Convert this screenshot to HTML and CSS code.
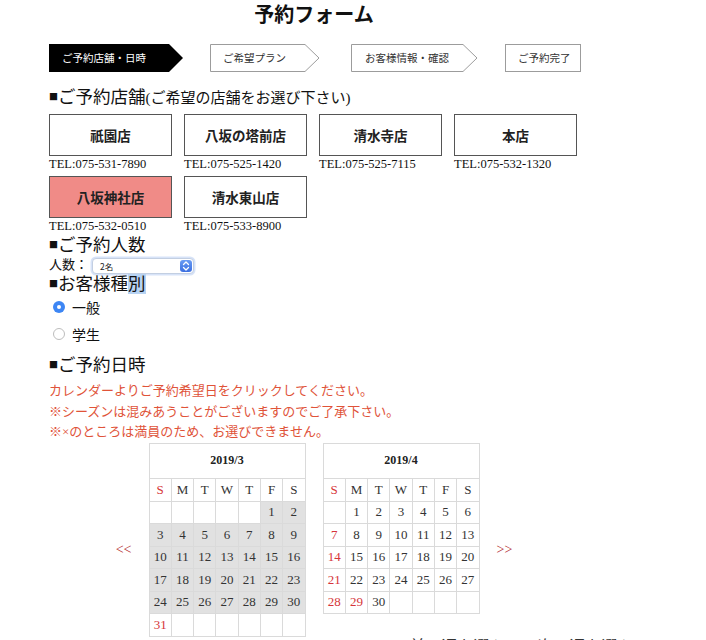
FILE: index.html
```html
<!DOCTYPE html>
<html lang="ja">
<head>
<meta charset="utf-8">
<title>予約フォーム</title>
<link rel="stylesheet" href="styles.css">
</head>
<body>
<div class="page">
  <h1 class="title">予約フォーム</h1>

  <div class="form">
    <div class="steps">
      <div class="step step-1">
        <svg class="step-bg" width="134" height="28" viewBox="0 0 134 28"><polygon points="0,0 120,0 134,14 120,28 0,28" fill="#000"/></svg>
        <span class="step-label">ご予約店舗・日時</span>
      </div>
      <div class="step step-2">
        <svg class="step-bg" width="110" height="28" viewBox="0 0 110 28"><polygon points="0.5,0.5 95,0.5 109,14 95,27.5 0.5,27.5" fill="#fff" stroke="#9c9c9c"/></svg>
        <span class="step-label">ご希望プラン</span>
      </div>
      <div class="step step-3">
        <svg class="step-bg" width="127" height="28" viewBox="0 0 127 28"><polygon points="0.5,0.5 112,0.5 126,14 112,27.5 0.5,27.5" fill="#fff" stroke="#9c9c9c"/></svg>
        <span class="step-label">お客様情報・確認</span>
      </div>
      <div class="step step-4">
        <span class="step-label">ご予約完了</span>
      </div>
    </div>

    <h2 class="heading heading-store"><span class="sq">■</span>ご予約店舗<span class="note">(ご希望の店舗をお選び下さい)</span></h2>

    <div class="stores">
      <div class="store"><div class="store-box">祇園店</div><div class="tel">TEL:075-531-7890</div></div>
      <div class="store"><div class="store-box">八坂の塔前店</div><div class="tel">TEL:075-525-1420</div></div>
      <div class="store"><div class="store-box">清水寺店</div><div class="tel">TEL:075-525-7115</div></div>
      <div class="store"><div class="store-box">本店</div><div class="tel">TEL:075-532-1320</div></div>
      <div class="store"><div class="store-box selected">八坂神社店</div><div class="tel">TEL:075-532-0510</div></div>
      <div class="store"><div class="store-box">清水東山店</div><div class="tel">TEL:075-533-8900</div></div>
    </div>

    <h2 class="heading heading-people"><span class="sq">■</span>ご予約人数</h2>
    <div class="people-row">
      <span class="people-label">人数：</span>
      <div class="select">
        <span class="select-value">2名</span>
        <span class="select-btn">
          <svg width="8" height="12" viewBox="0 0 8 12"><path d="M1.5 4.5 L4 2 L6.5 4.5 M1.5 7.5 L4 10 L6.5 7.5" fill="none" stroke="#fff" stroke-width="1.3" stroke-linecap="round" stroke-linejoin="round"/></svg>
        </span>
      </div>
    </div>

    <h2 class="heading heading-type"><span class="sq">■</span>お客様種<span class="hl">別</span></h2>
    <div class="radios">
      <label class="radio-row"><span class="radio checked"></span>一般</label>
      <label class="radio-row"><span class="radio"></span>学生</label>
    </div>

    <h2 class="heading heading-date"><span class="sq">■</span>ご予約日時</h2>
    <div class="notice">
      <p>カレンダーよりご予約希望日をクリックしてください。</p>
      <p>※シーズンは混みあうことがございますのでご了承下さい。</p>
      <p>※×のところは満員のため、お選びできません。</p>
    </div>
  </div>

  <div class="calendars">
    <span class="nav">&lt;&lt;</span>

    <div class="cal">
      <div class="cal-title">2019/3</div>
      <div class="wd sun">S</div><div class="wd">M</div><div class="wd">T</div><div class="wd">W</div><div class="wd">T</div><div class="wd">F</div><div class="wd">S</div>
      <div class="d"></div><div class="d"></div><div class="d"></div><div class="d"></div><div class="d"></div><div class="d past">1</div><div class="d past">2</div>
      <div class="d past">3</div><div class="d past">4</div><div class="d past">5</div><div class="d past">6</div><div class="d past">7</div><div class="d past">8</div><div class="d past">9</div>
      <div class="d past">10</div><div class="d past">11</div><div class="d past">12</div><div class="d past">13</div><div class="d past">14</div><div class="d past">15</div><div class="d past">16</div>
      <div class="d past">17</div><div class="d past">18</div><div class="d past">19</div><div class="d past">20</div><div class="d past">21</div><div class="d past">22</div><div class="d past">23</div>
      <div class="d past">24</div><div class="d past">25</div><div class="d past">26</div><div class="d past">27</div><div class="d past">28</div><div class="d past">29</div><div class="d past">30</div>
      <div class="d red">31</div><div class="d"></div><div class="d"></div><div class="d"></div><div class="d"></div><div class="d"></div><div class="d"></div>
    </div>

    <div class="cal-col">
      <div class="cal">
        <div class="cal-title">2019/4</div>
        <div class="wd sun">S</div><div class="wd">M</div><div class="wd">T</div><div class="wd">W</div><div class="wd">T</div><div class="wd">F</div><div class="wd">S</div>
        <div class="d"></div><div class="d">1</div><div class="d">2</div><div class="d">3</div><div class="d">4</div><div class="d">5</div><div class="d">6</div>
        <div class="d red">7</div><div class="d">8</div><div class="d">9</div><div class="d">10</div><div class="d">11</div><div class="d">12</div><div class="d">13</div>
        <div class="d red">14</div><div class="d">15</div><div class="d">16</div><div class="d">17</div><div class="d">18</div><div class="d">19</div><div class="d">20</div>
        <div class="d red">21</div><div class="d">22</div><div class="d">23</div><div class="d">24</div><div class="d">25</div><div class="d">26</div><div class="d">27</div>
        <div class="d red">28</div><div class="d red">29</div><div class="d">30</div><div class="d"></div><div class="d"></div><div class="d"></div><div class="d"></div>
      </div>
      <p class="more">前の週を選ぶ　　次の週を選ぶ</p>
    </div>

    <span class="nav">&gt;&gt;</span>
  </div>
</div>
</body>
</html>
```

FILE: styles.css
```css
* { box-sizing: border-box; }

html, body {
  margin: 0;
  padding: 0;
  background: #fff;
}

body {
  font-family: "Liberation Serif", "Noto Sans CJK JP", serif;
  color: #111;
}

.page {
  width: 628px;
}

.title {
  margin: 0;
  height: 30px;
  line-height: 30px;
  text-align: center;
  font-size: 20px;
  font-weight: 700;
}

.form {
  padding-left: 49px;
}

/* steps */
.steps {
  display: flex;
  gap: 27px;
  margin-top: 14px;
  height: 28px;
}

.step {
  position: relative;
  height: 28px;
  font-family: "Noto Sans CJK JP", sans-serif;
  font-size: 10.5px;
  color: #333;
}

.step-bg {
  position: absolute;
  left: 0;
  top: 0;
}

.step-label {
  position: relative;
  display: block;
  line-height: 28px;
  white-space: nowrap;
}

.step-1 { width: 134px; padding-left: 13px; color: #fff; }
.step-2 { width: 110px; padding-left: 13px; }
.step-3 { width: 127px; padding-left: 14px; margin-left: 4px; }
.step-4 {
  width: 76px;
  border: 1px solid #9c9c9c;
  padding-left: 12px;
}
.step-4 .step-label { line-height: 26px; }

/* headings */
.heading {
  margin: 0;
  font-weight: 400;
  font-size: 17.5px;
  line-height: 22px;
  white-space: nowrap;
}

.sq {
  font-family: "Noto Sans CJK JP", sans-serif;
  font-size: 9px;
  vertical-align: 3px;
}

.note {
  font-size: 15px;
}

.heading-store {
  margin-top: 13px;
  line-height: 24px;
}

/* stores */
.stores {
  display: grid;
  grid-template-columns: repeat(4, 123px);
  column-gap: 12px;
  row-gap: 4px;
  margin-top: 4px;
}

.store-box {
  height: 42px;
  border: 1px solid #555;
  display: flex;
  align-items: center;
  justify-content: center;
  font-size: 13.5px;
  font-weight: 700;
  color: #222;
  background: #fff;
}

.store-box.selected {
  background: #f08b87;
}

.tel {
  font-size: 12.5px;
  line-height: 16px;
  color: #111;
  white-space: nowrap;
}

/* people */
.people-row {
  display: flex;
  align-items: center;
  height: 18px;
  font-size: 13px;
}

.people-label {
  line-height: 18px;
}

.select {
  display: flex;
  align-items: center;
  justify-content: space-between;
  width: 102px;
  height: 16px;
  margin-left: 4px;
  margin-top: 2px;
  border: 1px solid #c3cfe2;
  border-radius: 4px;
  background: #fff;
  box-shadow: 0 0 0 1.5px rgba(140, 175, 235, 0.35);
  padding: 0 1px 0 7px;
}

.select-value {
  font-family: "Noto Sans CJK JP", sans-serif;
  font-size: 8.5px;
  line-height: 14px;
  color: #222;
}

.select-btn {
  display: flex;
  align-items: center;
  justify-content: center;
  width: 12px;
  height: 12px;
  border-radius: 3px;
  background: linear-gradient(#6a9cf4, #3b6fe0);
}

.heading-type {
  line-height: 20px;
}

.hl {
  display: inline-block;
  line-height: 20px;
  background: #b7d3f3;
}

/* radios */
.radio-row {
  display: flex;
  align-items: center;
  height: 27px;
  padding-left: 4px;
  font-size: 14px;
}

.radio-row:first-child {
  height: 26px;
}

.radio {
  width: 12px;
  height: 12px;
  border-radius: 50%;
  border: 1px solid #bdbdbd;
  background: #fff;
  margin-right: 7px;
  display: flex;
  align-items: center;
  justify-content: center;
}

.radio.checked {
  border: none;
  width: 12px;
  height: 12px;
  background: #3d86f4;
}

.radio.checked::after {
  content: "";
  width: 4px;
  height: 4px;
  border-radius: 50%;
  background: #fff;
}

.heading-date {
  margin-top: 6px;
  line-height: 24px;
}

/* notice */
.notice {
  margin-top: 4px;
  margin-bottom: 0;
  color: #e05339;
  font-size: 13px;
  line-height: 20.5px;
}

.notice p {
  margin: 0;
  white-space: nowrap;
}

/* calendars */
.calendars {
  display: flex;
  justify-content: center;
  align-items: flex-start;
  gap: 17px;
}

.nav {
  align-self: center;
  color: #b3292c;
  font-size: 14px;
  line-height: 16px;
}

.cal {
  display: grid;
  grid-template-columns: repeat(7, 1fr);
  grid-template-rows: 34px 22px;
  grid-auto-rows: 21.5px;
  gap: 1px;
  width: 157px;
  background: #dadada;
  border: 1px solid #dadada;
}

.cal-title {
  grid-column: 1 / -1;
  background: #fff;
  display: flex;
  align-items: center;
  justify-content: center;
  font-weight: 700;
  font-size: 12px;
  color: #222;
}

.cal > .wd,
.cal > .d {
  background: #fff;
  display: flex;
  align-items: center;
  justify-content: center;
  font-size: 13px;
  color: #333;
}

.cal .sun,
.cal .red {
  color: #d6353a;
}

.cal .past {
  background: #e1e1e1;
}

.cal-col {
  width: 157px;
}

.more {
  margin: 23px 0 0 87px;
  font-size: 16px;
  line-height: 20px;
  white-space: nowrap;
  color: #333;
}
```
